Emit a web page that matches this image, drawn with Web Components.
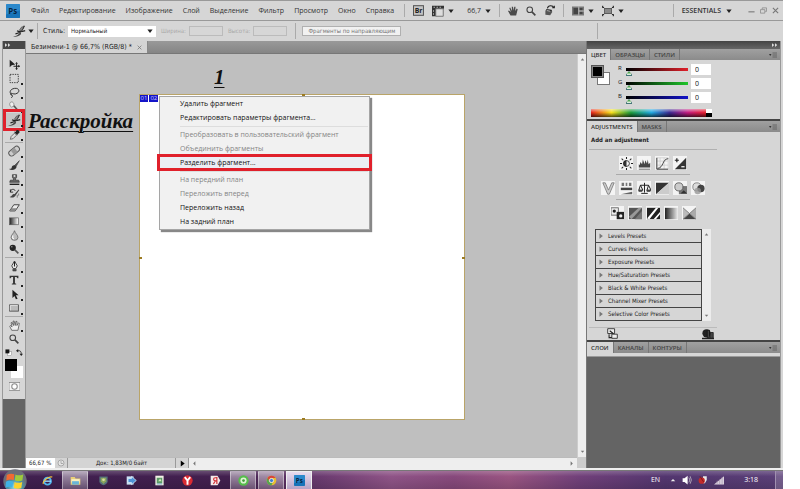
<!DOCTYPE html>
<html lang="ru">
<head>
<meta charset="utf-8">
<title>Безимени-1 @ 66,7%</title>
<style>
html,body{margin:0;height:100%}
body{background:#fff;font:7px/10px "Open Sans","Noto Sans",sans-serif;color:#222;overflow:hidden}
</style>
</head>
<body>
<ps-desktop></ps-desktop>
<script>
const base = `*{box-sizing:border-box}
button,input,select{font:inherit;color:inherit;margin:0;padding:0;border:0;background:none;border-radius:0}
.sep{width:1px;align-self:stretch;background:#aaa;margin:3px 0}
[hidden]{display:none}`;
function define(name, html, setup){
  const t = document.createElement('template');
  t.innerHTML = html.replace('<style>', '<style>' + base);
  customElements.define(name, class extends HTMLElement{
    connectedCallback(){
      if(this.shadowRoot) return;
      this.attachShadow({mode:'open'}).append(t.content.cloneNode(true));
      if(setup) setup(this, this.shadowRoot);
    }
  });
}

const K = 'fill="none" stroke="#222"';
const icons = {
  ps:`<rect width="16" height="16" rx="1" fill="#1673b8"/><path d="M0 0h16v7L0 12z" fill="#3f9ddd" opacity=".5"/><text x="2.6" y="11.5" font-family="Open Sans" font-weight="700" font-size="9" fill="#06233f">Ps</text>`,
  move:`<path d="M1 1v11l3-3 5-1z" fill="#222"/><path ${K} stroke-width="1.5" d="M11 6v9M6.5 10.500h9"/><path d="M11 4.500l2 2.500h-4zM11 16l2-2.500h-4zM16 10.500l-2.500-2v4z" fill="#222"/>`,
  marquee:`<rect x="1.500" y="2" width="12" height="12" ${K} stroke-width="1.200" stroke-dasharray="2 1.500"/>`,
  lasso:`<path ${K} stroke-width="1.300" d="M4 11C0 9 1 3 8 2c7-1 8 5 4 7-3 2-7 1-8 0M4 9c-2 1-2 3 0 3s1 3-1 4"/>`,
  quick:`<path d="M2 2c3-2 6 1 5 5L4 9C1 8 0 4 2 2z" fill="#eee" stroke="#777"/><path d="M7 7l7 8" stroke="#555" stroke-width="2.400"/>`,
  slice:`<path d="M0 14c5 0 8-3 9-6l1 3c-3 3-6 4-10 3z" fill="#444"/><path d="M5 7c3 2 6 1 10 0M3 11C9 10 12 6 14 1" fill="none" stroke="#222" stroke-width="1.600"/><path d="M8 6l3-4 2 1-3 5z" fill="#888" stroke="#333" stroke-width=".7"/>`,
  dropper:`<path d="M2 15l1-4 5-5 3 3-5 5z" fill="#ddd" stroke="#444"/><path d="M7 4l5 5 1-2c3-1 3-4 1-5s-4 0-4 2z" fill="#222"/>`,
  heal:`<g transform="rotate(-40 8 8)"><rect x="0" y="4.500" width="16" height="7.500" rx="3.500" fill="#ccc" stroke="#555" stroke-width="1.300"/><rect x="5" y="5" width="6" height="7" fill="#999"/></g>`,
  brush:`<path d="M15 1L8 8l2 2z" fill="#555" stroke="#444"/><path d="M9 8c-3-1-5 1-5 3s-2 2-4 2c4 3 10 1 11-3z" fill="#333"/>`,
  stamp:`<path d="M5 1h6v4L9.500 7v2H14l1 3H1l1-3h4.500V7L5 5z" fill="#666" stroke="#333"/><path d="M1 15h14" stroke="#222" stroke-width="2"/><circle cx="8" cy="3" r="1.500" fill="#ddd"/>`,
  history:`<path d="M14 2L8 9c-3-1-3 3-7 4 4 2 8 0 9-3l5-7z" fill="#444"/><path d="M2 6c0-5 6-5 7-2M2 2v4h4" ${K} stroke-width="1.300"/><path d="M12 10v4M14 8v3" stroke="#555"/>`,
  eraser:`<path d="M1 13l6-9h8l-6 9z" fill="#eee" stroke="#444" stroke-width="1.400"/><path d="M1 13l3-4h7l-2 4z" fill="#888"/>`,
  gradient:`<defs><linearGradient id="g"><stop stop-color="#222"/><stop offset="1" stop-color="#fff"/></linearGradient></defs><rect x="1" y="3" width="14" height="11" fill="url(#g)" stroke="#555"/>`,
  blur:`<path d="M8 1c1 4 5 6 5 10a5 4 0 0 1-10 0C3 7 7 5 8 1z" fill="#bbb" stroke="#555"/><path d="M6 8c-1 2-1 4 1 5" stroke="#fff" stroke-width="1.500" fill="none"/>`,
  dodge:`<circle cx="6" cy="6" r="5" fill="#222"/><path d="M9 9l6 6" stroke="#555" stroke-width="2.500"/><circle cx="4.500" cy="4.500" r="1.200" fill="#999"/>`,
  pen:`<path d="M8 0l4 7-2 4H6L4 7z" fill="#eee" stroke="#333" stroke-width="1.300"/><path d="M8 1v7M5 13h6" stroke="#222" stroke-width="1.600"/><rect x="5.500" y="12" width="5" height="3" fill="#444"/>`,
  type:`<path d="M1 1h14v4h-1.500L12 3H9.500v10l2 1v1h-7v-1l2-1V3H4L2.500 5H1z" fill="#333"/>`,
  select:`<path d="M5 1v12l3-3 2 5 2.500-1L10 9h4z" fill="#222"/>`,
  rect:`<rect x="1" y="3" width="14" height="10" fill="#bbb" stroke="#444" stroke-width="1.300"/><path d="M2 12V4h12" stroke="#fff" fill="none"/>`,
  hand:`<path d="M4 15L1 9l1-1 2.500 2L3 4l1.500-.5L6.500 8 6 1.500h1.500L9 8l1-6h1.500L11.500 8 14 4l1 1-2 10z" fill="#eee" stroke="#444"/>`,
  handdark:`<path d="M4 15L0 8l1.500-1 3 2.500L2 3l1.500-.8L6.500 8 6 1h2l1 6 1-6h2l-.5 7L14 4l1.500 1L13 15z" fill="#4a4a4a"/>`,
  zoom:`<circle cx="6" cy="6" r="4.500" fill="#d8d8d8" stroke="#444" stroke-width="1.700"/><path d="M9.500 9.500L15 15" stroke="#444" stroke-width="2.600"/>`,
  rotate:`<path d="M2 14V8l3-2 6 1 1 3-3 5z" fill="#555"/><path d="M5 5c1-5 8-5 9-1M12 4h3V1M3 7l8 1" ${K} stroke-width="1.600"/><path d="M4 8l5 1" stroke="#ddd"/>`,
  defaults:`<rect x="6" y="6" width="9" height="9" fill="#fff" stroke="#777"/><rect x="1" y="1" width="9" height="9" fill="#111"/>`,
  swap:`<path d="M4 4c6-1 8 2 8 7" ${K} stroke-width="2"/><path d="M0 4l5-4v8zM12 16l-4-5h8z" fill="#222"/>`,
  mask:`<rect x="0" y="2" width="16" height="12" fill="#f5f5f5" stroke="#777"/><circle cx="8" cy="8" r="4" fill="#fff" stroke="#888" stroke-width="1.500"/>`,
  br:`<rect x=".7" y="1" width="14.500" height="14" fill="#c4c4c4" stroke="#555" stroke-width="1.500"/><text x="2.500" y="12" font-family="Open Sans" font-weight="700" font-size="10" fill="#222">Br</text>`,
  layout:`<path d="M0 1h16v4H5v10H0z" fill="#333"/><path d="M5 5h10v10H5z" fill="#ddd" stroke="#555"/><path d="M2 3h2M6 3h2M10 3h2M2 7v2M2 11v2" stroke="#ddd"/>`,
  arrange:`<rect x="0" y="2" width="16" height="12" fill="#777"/><path d="M2 4h6v8H2zM10 4h4v3h-4zM10 9h4v3h-4z" fill="#444"/><path d="M9 2v12M9 8h7" stroke="#ccc"/>`,
  screen:`<rect x="3.500" y="4.500" width="9" height="7" fill="#888" stroke="#444"/><path d="M0 2l3 2M16 2l-3 2M0 14l3-2M16 14l-3-2M1 1v3M15 1v3M1 12v3M15 12v3" ${K} stroke-width="1.300"/>`,
  down:`<path d="M1 4h14L8 13z" fill="#222"/>`,
  right:`<path d="M4 1l9 7-9 7z" fill="#777"/>`,
  panelmenu:`<path d="M0 6h5L2.500 10z" fill="#333"/><path d="M7 4h9M7 8h9M7 12h9" stroke="#555" stroke-width="1.500"/>`,
  min:`<path d="M1 11h14" stroke="#888" stroke-width="3"/>`,
  restore:`<path d="M5 5V2h10v8h-3M1 6h10v8H1z" fill="none" stroke="#888" stroke-width="1.800"/>`,
  close:`<path d="M2 2l12 12M14 2L2 14" stroke="#777" stroke-width="2.500"/>`,
  chevrons:`<path d="M0 3l6 5-6 5zM8 3l6 5-6 5z" fill="#ddd"/>`,
  bright:`<path d="M8 4a4 4 0 0 0 0 8z" fill="#333"/><circle cx="8" cy="8" r="3.600" ${K}/><path d="M8 0v2.500M8 13.500V16M0 8h2.500M13.500 8H16M2 2l2 2M12 12l2 2M2 14l2-2M12 4l2-2" ${K} stroke-width="1.300"/>`,
  levels:`<path d="M1 13V9l1 1 1-4 2 3 1-6 2 6 1-5 2 4 1-5 1 6 2-2v6z" fill="#444"/><path d="M1 15h14" stroke="#555"/>`,
  curves:`<path d="M1 1h14v14H1zM5 1v14M10 1v14M1 5h14M1 10h14" fill="none" stroke="#ccc"/><path d="M2 14c8-1 5-11 13-12M1 1v14h14" ${K}/>`,
  exposure:`<path d="M15 1v14H1z" fill="#333"/><path d="M1 4h5M3.500 1.500v5" stroke="#222" stroke-width="1.500"/><path d="M9 12h4" stroke="#fff" stroke-width="1.500"/>`,
  vibrance:`<path d="M1 1l6 14h2l6-14h-3L8 10 4 1z" fill="#ccc" stroke="#777"/>`,
  hue:`<path d="M2 1h3v4H2zM7 1h2v4H7zM11 1h3v4h-3z" fill="#777"/><rect x="1" y="7" width="14" height="3" fill="#444"/><path d="M1 15l14-3v3z" fill="#666"/>`,
  balance:`<path d="M8 1v12M3 4h10M4 14h8M3 4l-2 6h5L3 4M13 4l-2 6h5l-3-6" ${K} stroke-width="1.200"/><path d="M0 10h6l-1 2H1zM10 10h6l-1 2h-4z" fill="#333"/>`,
  bw:`<path d="M0 1h16L0 15z" fill="#333"/><path d="M16 1v14H0z" fill="#ccc"/>`,
  photo:`<rect x="6" y="5" width="10" height="10" fill="#777"/><circle cx="6" cy="6" r="5" fill="#ccc" stroke="#555"/><path d="M8 14l4-4 4 4" fill="#333"/>`,
  mixer:`<circle cx="6" cy="6" r="5" fill="#ddd" stroke="#777"/><circle cx="11" cy="8" r="4.500" fill="#444"/><circle cx="7" cy="11" r="4" fill="#999" opacity=".8"/>`,
  invert:`<rect x="0" y="1" width="9" height="9" fill="#eee" stroke="#555"/><rect x="7" y="6" width="9" height="9" fill="#222"/><circle cx="4" cy="5" r="2" fill="#222"/><circle cx="12" cy="11" r="2" fill="#eee"/>`,
  poster:`<path d="M0 1h16v14H0z" fill="#555"/><path d="M0 12L12 1h4L3 15z" fill="#999"/><path d="M7 15L16 5v10z" fill="#777"/>`,
  threshold:`<path d="M0 1h16v14H0z" fill="#222"/><path d="M0 14L11 1h3L3 15zM8 15l8-9v3l-5 6z" fill="#fff"/>`,
  gradmap:`<defs><linearGradient id="g"><stop stop-color="#222"/><stop offset="1" stop-color="#eee"/></linearGradient></defs><rect x="0" y="1" width="16" height="14" fill="url(#g)"/>`,
  selective:`<path d="M0 1v14L8 8z" fill="#bbb"/><path d="M16 1v14L8 8z" fill="#aaa"/><path d="M0 15L8 8l8 7z" fill="#444"/><path d="M0 1l16 14M16 1L0 15" stroke="#777"/>`,
  expand:`<path d="M1 1h10v7H1zM7 9h8v6H7z" fill="#eee" stroke="#333" stroke-width="1.300"/><path d="M3 9v5h4M4 4l5 4" stroke="#222" stroke-width="1.500" fill="none"/>`,
  clip:`<circle cx="6" cy="7" r="5.500" fill="#222"/><path d="M7 3h3v10H7zM11 6h4v8h-4z" fill="#444" stroke="#111"/><path d="M0 14h16" stroke="#222" stroke-width="2"/>`,
  info:`<circle cx="8" cy="8" r="6" fill="#e5e5e5" stroke="#777"/><path d="M8 4v5h4" fill="none" stroke="#777"/>`,
  start:`<defs><radialGradient id="s" cy=".75"><stop stop-color="#9fe3e8"/><stop offset=".6" stop-color="#4b94a6"/><stop offset="1" stop-color="#6b6d78"/></radialGradient></defs><circle cx="8" cy="8" r="7.800" fill="url(#s)"/><path d="M2.500 4q2.500-1.500 5-.5L7.200 7.500q-2-1-5 .2z" fill="#f26a32"/><path d="M8.300 3.600q2 1.200 5.200 0l-.6 4q-2.300 1-5 0z" fill="#9fcb3b"/><path d="M2 8.500q2-1.200 4.800 0l-.6 4q-2-1.200-4.500 0z" fill="#3fb2e6"/><path d="M7.700 8.600q2 1.200 5.100 0l-.6 4q-2 1.100-5 0z" fill="#fbd22d"/>`,
  ie:`<circle cx="8" cy="9" r="5" fill="none" stroke="#51b6ef" stroke-width="2.800"/><path d="M4 9h9" stroke="#9adbff" stroke-width="2"/><path d="M2 13C0 10 9 1 15 3" fill="none" stroke="#f2c33c" stroke-width="1.600"/>`,
  folder:`<path d="M1 3h6l1 2h7v9H1z" fill="#e9cf77"/><path d="M2 6h12v5H2z" fill="#f8efc0"/><path d="M3 9h10v5H3z" fill="#69b5d7"/>`,
  shield:`<path d="M2 2h12v7c0 3-3 5-6 6-3-1-6-3-6-6z" fill="#55717c"/><path d="M4 4h8v5l-4 4-4-4z" fill="#8aa65c"/><circle cx="8" cy="7" r="2" fill="#d6dca0"/>`,
  bluearrow:`<rect x="1" y="2" width="10" height="12" fill="#c9e0f2"/><path d="M3 5h5V2l7 6-7 6v-3H3z" fill="#4e94d8" stroke="#e4f1fb"/>`,
  doc:`<path d="M2 1h12v14H2z" fill="#f0f0e4"/><path d="M4 4h8v8H4z" fill="#5a9a66"/><path d="M6 9l3-4 2 4z" fill="#cfe9b9"/><path d="M4 13h8" stroke="#3a83b7"/>`,
  yandex:`<circle cx="8" cy="8" r="7.500" fill="#d92a32"/><path d="M4 3l4 5 4-5M8 8v6" fill="none" stroke="#fff" stroke-width="2.800"/>`,
  ya:`<path d="M1 1h10l4 7-4 7H1z" fill="#f4e9e9"/><path d="M10 4H7.500a2.200 2.200 0 0 0 0 4.500H10M10 3v10M8 8l-3 5" fill="none" stroke="#d22e35" stroke-width="1.700"/>`,
  torrent:`<circle cx="8" cy="8" r="7.500" fill="#57bd4c"/><circle cx="8" cy="8" r="4.500" fill="#dff3d5"/><circle cx="8" cy="8" r="2" fill="#43a03b"/>`,
  chrome:`<circle cx="8" cy="8" r="7" fill="#e8bd30"/><path d="M8 1a7 7 0 0 1 6 3.500H8A4 4 0 0 0 4.500 10L2 4.500A7 7 0 0 1 8 1z" fill="#d9453a"/><path d="M2 4.500L5 10a4 4 0 0 0 4.500 1.500L8 15A7 7 0 0 1 2 4.500z" fill="#53a84f"/><circle cx="8" cy="8" r="3" fill="#3f7fd1" stroke="#fff"/>`,
  sound:`<path d="M1 5h3l5-4v14l-5-4H1z" fill="#fff"/><path d="M11 4q3 4 0 8M13 2q4 6 0 12" fill="none" stroke="#ddd"/>`,
  alert:`<path d="M8 2h6v6l-3 5H8z" fill="#e8e8e8"/><circle cx="6" cy="9" r="5" fill="#c32a2a"/><path d="M3 2l6 9" stroke="#7c1616" stroke-width="1.500"/>`,
  signal:`<path d="M0 15L16 2v13z" fill="#d9d0dd"/><path d="M5 9v6M9 7v8M13 3v12" stroke="#a394ac"/>`,
  up:`<path d="M2 11l6-6 6 6z" fill="#eee"/>`,
  tup:`<path d="M4 10l4-5 4 5z" fill="#777"/>`, tdown:`<path d="M4 6l4 5 4-5z" fill="#777"/>`,
  tleft:`<path d="M10 3L5 8l5 5z" fill="#777"/>`, tright:`<path d="M6 3l5 5-5 5z" fill="#777"/>`, play:`<path d="M4 1l9 7-9 7z" fill="#000"/>`
};
customElements.define('ps-icon', class extends HTMLElement{
  connectedCallback(){
    if(this.shadowRoot) return;
    const s = this.getAttribute('size') || 10;
    this.attachShadow({mode:'open'}).innerHTML = `<style>:host{display:inline-flex;flex:none;width:${s}px;height:${s}px}svg{width:100%;height:100%;display:block}</style><svg viewBox="0 0 16 16" aria-hidden="true">${icons[this.getAttribute('name')]||''}</svg>`;
  }
});
const ic = (n, s=10) => `<ps-icon name="${n}" size="${s}"></ps-icon>`;
const drop = ic('down', 6);

define('ps-menubar', `<style>
:host{display:flex;align-items:center;height:21px;padding:0 4px 0 6px;background:#d6d6d6;border-top:1px solid #999;border-bottom:1px solid #999;color:#333}
nav{display:flex;gap:10px;margin:0 10px 0 11px}
button{display:flex;align-items:center;gap:4px}
.tools{display:flex;align-self:stretch;align-items:center;gap:8px}
.zoom{margin-left:5px}
.right{display:flex;align-self:stretch;align-items:center;gap:8px;margin-left:auto}
.space{margin-right:8px;gap:5px;font-weight:600}
.win{gap:5px;display:flex}
</style>${ic('ps',14)}
<nav>${['Файл','Редактирование','Изображение','Слой','Выделение','Фильтр','Просмотр','Окно','Справка'].map(x=>`<button>${x}</button>`).join('')}</nav>
<div class="tools"><i class="sep"></i><button aria-label="Bridge">${ic('br',11)}</button><button aria-label="Вид">${ic('layout',12)}${drop}</button>
<button class="zoom">66,7 ${drop}</button><i class="sep"></i>
<button aria-label="Рука">${ic('handdark',10)}</button><button aria-label="Масштаб">${ic('zoom',10)}</button><button aria-label="Поворот">${ic('rotate',11)}</button><i class="sep"></i>
<button aria-label="Документы">${ic('arrange',12)}${drop}</button><button aria-label="Экран">${ic('screen',12)}${drop}</button></div>
<div class="right"><i class="sep"></i><button class="space">ESSENTIALS ${drop}</button>
<span class="win"><button aria-label="Свернуть">${ic('min',7)}</button><button aria-label="Восстановить">${ic('restore',7)}</button><button aria-label="Закрыть">${ic('close',7)}</button></span></div>`);

define('ps-options', `<style>
:host{display:flex;align-items:center;height:20px;padding:0 185px 0 13px;background:#d6d6d6;font-family:"DejaVu Sans Condensed","DejaVu Sans",sans-serif}
.tool{display:flex;align-items:center;gap:2px}
.sep{margin:2px 5px 2px 3px}
label{display:flex;align-items:center;gap:3px;margin-right:5px}
select{appearance:none;width:88px;height:11px;background:#fff;font-size:6px;padding:0 3px}
.pick{display:flex;align-items:center}.pick ps-icon{margin-left:-9px;margin-right:3px;pointer-events:none}
.off{color:#aaa;font-size:6px}.off input{width:34px;height:10px;border:1px solid #bbb}
.slices{width:99px;height:10px;border:1px solid #b0b0b0;background:#f1f1f1;color:#777;font-size:6px;line-height:8px;margin-left:1px;white-space:nowrap}
.end{margin-left:auto;margin-right:0}
</style><button class="tool" aria-label="Раскройка">${ic('slice',13)}${drop}</button><i class="sep"></i>
<label>Стиль: <span class="pick"><select><option>Нормальный</option></select>${drop}</span></label>
<label class="off">Ширина: <input disabled></label><label class="off">Высота: <input disabled></label><i class="sep"></i>
<button class="slices">Фрагменты по направляющим</button><i class="sep end"></i>`);

const tool = ([n,l,s=11]) => `<button aria-label="${l}"${n==='slice'?' class="on"':''}>${ic(n,s)}</button>`;
define('ps-tools', `<style>
:host{display:flex;flex-direction:column;background:#646464;margin-left:2px;border-left:1px solid #999;border-right:1px solid #999}
header{height:8px;background:#474747;padding:0 2px;display:flex;align-items:center}
.bar{display:flex;flex-direction:column;align-items:center;background:#d6d6d6;padding:8px 0 6px}
button{position:relative;width:20px;height:14px;display:flex;align-items:center;justify-content:center}
.group{display:flex;flex-direction:column}
.group button:not(:first-child)::after,.group.all button:first-child::after{content:"";position:absolute;right:1px;bottom:0;border:1px solid #222}
.group.last button:last-child::after{display:none}
hr{width:18px;height:1px;border:0;background:#aaa;margin:1px 0}
.on{background:#c6c6c6}
.on::before{content:"";position:absolute;inset:-4px -1px;border:3px solid #e0202b}
.tiny{display:flex;gap:3px;padding:2px 0}.tiny button{width:8px;height:8px}
.colours{position:relative;width:18px;height:19px;margin-top:1px}
.colours button{position:absolute;width:12px;height:12px}
.bg{right:0;bottom:0;background:#fff}.fg{left:0;top:0;background:#000}
.quick{margin-top:1px}
</style><header>${ic('chevrons',6)}</header><div class="bar">
<div class="group">${[['move','Перемещение'],['marquee','Выделение'],['lasso','Лассо'],['quick','Быстрое выделение'],['slice','Раскройка',13],['dropper','Пипетка']].map(tool).join('')}</div><hr>
<div class="group all">${[['heal','Восстановление',12],['brush','Кисть'],['stamp','Штамп'],['history','Архивная кисть'],['eraser','Ластик'],['gradient','Градиент',10],['blur','Размытие'],['dodge','Осветлитель',10]].map(tool).join('')}</div><hr>
<div class="group all">${[['pen','Перо'],['type','Текст',10],['select','Стрелка'],['rect','Прямоугольник',10]].map(tool).join('')}</div><hr>
<div class="group all last">${[['hand','Рука'],['zoom','Масштаб',10]].map(tool).join('')}</div>
<div class="tiny"><button aria-label="По умолчанию">${ic('defaults',7)}</button><button aria-label="Поменять">${ic('swap',7)}</button></div>
<div class="colours"><button class="bg" aria-label="Фон"></button><button class="fg" aria-label="Основной цвет"></button></div>
<button class="quick" aria-label="Быстрая маска">${ic('mask',11)}</button></div>`);

const mi = (t,c='') => `<button role="menuitem" class="${c}"${c==='off'?' disabled':''}>${t}</button>`;
define('ps-context-menu', `<style>
:host{display:flex;flex-direction:column;width:211px;background:#f1f1f1;border:1px solid #a5a5a5;box-shadow:2px 2px 1px #888;color:#111}
button{position:relative;height:14px;line-height:14px;padding-left:20px;text-align:left;white-space:nowrap}
.off{color:#858585}
.on{background:#ebeef4}
.on::after{content:"";position:absolute;inset:-2px -3px -1px;border:3px solid #e0202b}
hr{margin:1px 1px 1px 20px;border:0;height:1px;background:#ddd;flex:none}
</style>${mi('Удалить фрагмент')}${mi('Редактировать параметры фрагмента...')}<hr>${mi('Преобразовать в пользовательский фрагмент','off')}${mi('Объединить фрагменты','off')}${mi('Разделить фрагмент...','on')}<hr>${mi('На передний план','off')}${mi('Переложить вперед','off')}${mi('Переложить назад')}${mi('На задний план')}`,
 el => el.setAttribute('role','menu'));

define('ps-document', `<style>
:host{display:grid;grid-template:13px minmax(0,1fr) 11px / minmax(0,1fr) 9px;min-width:0}
.tabs{grid-column:1/-1;display:flex;background:linear-gradient(#999,#858585);border-bottom:1px solid #777}
.tabs button{display:flex;align-items:center;gap:5px;padding:0 5px;background:#d4d4d4;border-right:1px solid #888;font-family:"DejaVu Sans Condensed","DejaVu Sans",sans-serif}
.canvas{position:relative;background:#bfbfbf;overflow:hidden;display:flex;justify-content:center;align-items:flex-start;padding-top:40px}
.page{position:relative;width:326px;height:326px;background:#fff;border:1px solid #b9a468}
.page i{position:absolute;width:3px;height:2px;background:#9c7b21}
.badges{display:flex;gap:1px}
.badges span{background:#1414c8;color:#cfcfff;font-size:6px;line-height:7px;height:7px;padding:0 1px}
.note{position:absolute;font:italic 700 21px/22px "Liberation Serif",serif;color:#111;text-decoration:underline;text-decoration-thickness:1px;text-underline-offset:3px}
.one{left:188px;top:12px}.name{left:2px;top:56px}
ps-context-menu{position:absolute;left:133px;top:42px}
.v,.h{background:#eee;display:flex;justify-content:space-between;align-items:center}
.v{flex-direction:column;border-left:1px solid #ccc;padding:2px 0}
.status{display:flex;background:#d4d4d4;border-top:1px solid #bbb;font-family:"DejaVu Sans Condensed","DejaVu Sans",sans-serif;font-size:6px}
.status input{width:29px;background:#fff;padding-left:3px}
.status button{width:13px;display:flex;align-items:center;justify-content:center;border-right:1px solid #999}
.status span{width:108px;text-align:center;border-right:1px solid #999;line-height:10px}
.h{flex:1;padding:0 2px}
.corner{background:#ccc}
</style><div class="tabs" role="tablist"><button role="tab">Безимени-1 @ 66,7% (RGB/8) * ${ic('close',5)}</button></div>
<div class="canvas"><div class="page"><div class="badges"><span>01</span><span>02</span></div>
<i style="left:50%;top:-1px"></i><i style="left:50%;bottom:-1px"></i><i style="left:-1px;top:50%"></i><i style="right:-1px;top:50%"></i></div>
<span class="note one">1</span><span class="note name">Расскройка</span><ps-context-menu></ps-context-menu></div>
<div class="v">${ic('tup',7)}${ic('tdown',7)}</div>
<div class="status"><input value="66,67 %" aria-label="Масштаб"><button aria-label="Сведения">${ic('info',8)}</button><span>Док: 1,83M/0 байт</span><button aria-label="Далее">${ic('play',7)}</button><div class="h">${ic('tleft',7)}${ic('tright',7)}</div></div><div class="corner"></div>`);

define('ps-tabs', `<style>
:host{display:flex;height:11px;background:linear-gradient(#a0a0a0,#8b8b8b);padding-right:3px;align-items:stretch}
button{padding:0 4px;border-right:1px solid #777;color:#444;font-size:6px;font-weight:600;line-height:10px;white-space:nowrap}
button:first-of-type{background:#d6d6d6;color:#333}
.more{margin-left:auto;align-self:center}
</style><ps-icon class="more" name="panelmenu" size="8"></ps-icon>`,
 (el,r) => el.getAttribute('labels').split(',').forEach((t,i) => {
   const b = document.createElement('button');
   b.textContent = t;
   b.setAttribute('role','tab');
   b.setAttribute('aria-selected', String(i === 0));
   r.insertBefore(b, r.querySelector('.more'));
 }));

const ch = (l,c) => `<label><span>${l}</span><input type="range" min="0" max="255" value="0" style="--c:${c}"><input class="num" value="0" aria-label="${l}"></label>`;
define('ps-colour', `<style>
:host{display:block;padding:4px 4px 2px;background:#d6d6d6;border-bottom:2px solid #444}
.top{display:flex;gap:8px}
.sw{position:relative;width:19px;height:20px;margin-top:1px}
.sw button{position:absolute;width:13px;height:13px;border:1px solid #777}
.bg{right:0;bottom:0;background:#fff}.sw .fg{left:0;top:0;background:#000;border:1px solid #555;box-shadow:inset 0 0 0 1px #888}
.rows{display:flex;flex-direction:column;gap:3px}
label{display:flex;align-items:center;height:11px;font-size:6px;gap:2px}
label span{width:6px;line-height:9px;align-self:flex-start}
input[type=range]{appearance:none;width:62px;height:11px}
input[type=range]::-webkit-slider-runnable-track{height:3px;background:linear-gradient(90deg,#000,var(--c))}
input[type=range]::-webkit-slider-thumb{appearance:none;width:6px;height:5px;margin:3px 0 0 0;background:linear-gradient(#393,#fff);border:1px solid #477;clip-path:polygon(50% 0,100% 70%,100% 100%,0 100%,0 70%)}
label .num{width:20px;height:11px;background:#fff;padding-left:4px;margin-left:1px;font-size:7px;color:#111}
.ramp{display:flex;width:121px;height:8px;margin-top:6px;background:linear-gradient(#fff8,#fff0 45%,#000a),linear-gradient(90deg,#e3201b,#f6e01c 17%,#1e9c3c 33%,#20a8e0 50%,#3b2a92 65%,#c31c80 80%,#e8202b 95%)}
.ramp i{width:6px;margin-left:auto;background:linear-gradient(#fff 50%,#000 50%)}
</style><div class="top"><div class="sw"><button class="bg" aria-label="Фон"></button><button class="fg" aria-label="Цвет"></button></div>
<div class="rows">${ch('R','#e0202b')}${ch('G','#1fc52b')}${ch('B','#1212c8')}</div></div><div class="ramp"><i></i></div>`);

const row = a => `<div class="icons">${a.map(n=>`<button aria-label="${n}">${ic(n,13)}</button>`).join('')}</div>`;
define('ps-adjustments', `<style>
:host{display:flex;flex-direction:column;background:#d6d6d6;padding:3px 2px 0;border-bottom:2px solid #444}
.in{width:128px;display:flex;flex-direction:column;align-items:center}
h2{font:700 6px/10px "DejaVu Sans Condensed","DejaVu Sans",sans-serif;margin:0;padding:0 2px 4px;align-self:stretch;border-bottom:1px solid #b0b0b0}
.icons{display:flex;gap:4px;padding:6px 0 4px}
.icons button{width:14px;height:14px;display:grid;place-items:center;background:#f4f4f4}
.in>hr{width:74px;height:1px;margin:0;border:0;background:#aaa}
.list{display:flex;width:116px;margin-top:5px}
ul{flex:1;list-style:none;margin:0;padding:0;border:1px solid #444;border-bottom:0}
li{height:13px;border-bottom:1px solid #444}
li button{display:flex;align-items:center;gap:4px;padding-left:2px;width:100%;height:12px;font:6px/12px "DejaVu Sans Condensed","DejaVu Sans",sans-serif;white-space:nowrap}
.bar{width:9px;background:#ececec;display:flex;flex-direction:column;align-items:center;justify-content:space-between;padding:2px 0}
footer{display:flex;justify-content:space-between;align-self:stretch;border-top:1px solid #bbb;margin-top:6px;padding:0 3px 0 18px}
footer button{display:flex;height:12px}
</style><div class="in"><h2>Add an adjustment</h2>${row(['bright','levels','curves','exposure'])}<hr>${row(['vibrance','hue','balance','bw','photo','mixer'])}<hr>${row(['invert','poster','threshold','gradmap','selective'])}
<div class="list"><ul>${['Levels Presets','Curves Presets','Exposure Presets','Hue/Saturation Presets','Black &amp; White Presets','Channel Mixer Presets','Selective Color Presets'].map(x=>`<li><button>${ic('right',6)}${x}</button></li>`).join('')}</ul><div class="bar">${ic('tup',7)}${ic('tdown',7)}</div></div>
<footer><button aria-label="Развернуть">${ic('expand',11)}</button><button aria-label="Обрезать">${ic('clip',12)}</button></footer></div>`);

define('ps-panels', `<style>
:host{display:flex;flex-direction:column;background:#646464;border-left:1px solid #777;border-right:1px solid #999;margin-right:2px}
header{height:8px;background:linear-gradient(#444,#666);display:flex;justify-content:flex-end;align-items:center;padding-right:2px}
.foot{height:4px;background:#d6d6d6;border-bottom:1px solid #999}
</style><header>${ic('chevrons',6)}</header><ps-tabs labels="ЦВЕТ,ОБРАЗЦЫ,СТИЛИ"></ps-tabs><ps-colour></ps-colour><ps-tabs labels="ADJUSTMENTS,MASKS"></ps-tabs><ps-adjustments></ps-adjustments><ps-tabs labels="СЛОИ,КАНАЛЫ,КОНТУРЫ"></ps-tabs><div class="foot"></div>`);

define('win-taskbar', `<style>
:host{display:flex;align-items:stretch;height:18px;background:linear-gradient(#fff3,#0000 30%,#0002),linear-gradient(90deg,#402050,#43204f 30%,#6b3b70 41%,#8f5487 50%,#87497c 58%,#9a5582 65%,#71407a 74%,#53366f 85%,#5b4078);color:#fff}
.apps{display:flex;gap:2px;margin-left:4px}
button{display:grid;place-items:center;width:26px}
.start{width:30px;margin-top:-2px;overflow:visible}
.open{background:linear-gradient(#ffffff88,#ffffff38);border:1px solid #ffffff66;border-bottom:0}
.active{background:linear-gradient(#e8dcee,#b7a3c6);border:1px solid #eee;border-bottom:0}
.tray{margin-left:auto;display:flex;align-items:center;gap:6px}
.tray span{font-size:7px;line-height:14px}
.lang{margin-right:4px}
.tray .time{margin:0 17px 0 14px}
.show{width:8px;border-left:1px solid #a090b0;background:#ffffff28}
</style><button class="start" aria-label="Пуск">${ic('start',24)}</button>
<div class="apps">${[['ie'],['folder','open'],['shield'],['bluearrow'],['doc'],['yandex'],['ya'],['torrent','open'],['chrome','open'],['ps','active']].map(([n,c=''])=>`<button class="${c}" aria-label="${n}">${ic(n,11)}</button>`).join('')}</div>
<div class="tray"><span class="lang">EN</span>${ic('up',6)}${ic('sound',10)}${ic('alert',10)}${ic('signal',10)}<span class="time">3:18</span></div><button class="show" aria-label="Показать рабочий стол"></button>`);

define('ps-desktop', `<style>
:host{display:grid;grid-template-rows:auto auto minmax(0,1fr) auto;height:100vh;margin-right:17px;background:#d6d6d6}
main{display:grid;grid-template-columns:26px minmax(0,1fr) 197px;min-height:0}
win-taskbar{margin-top:3px;box-shadow:0 -1px #777,0 -3px #eee}
</style><ps-menubar></ps-menubar><ps-options></ps-options><main><ps-tools></ps-tools><ps-document></ps-document><ps-panels></ps-panels></main><win-taskbar></win-taskbar>`);
</script>
</body>
</html>
